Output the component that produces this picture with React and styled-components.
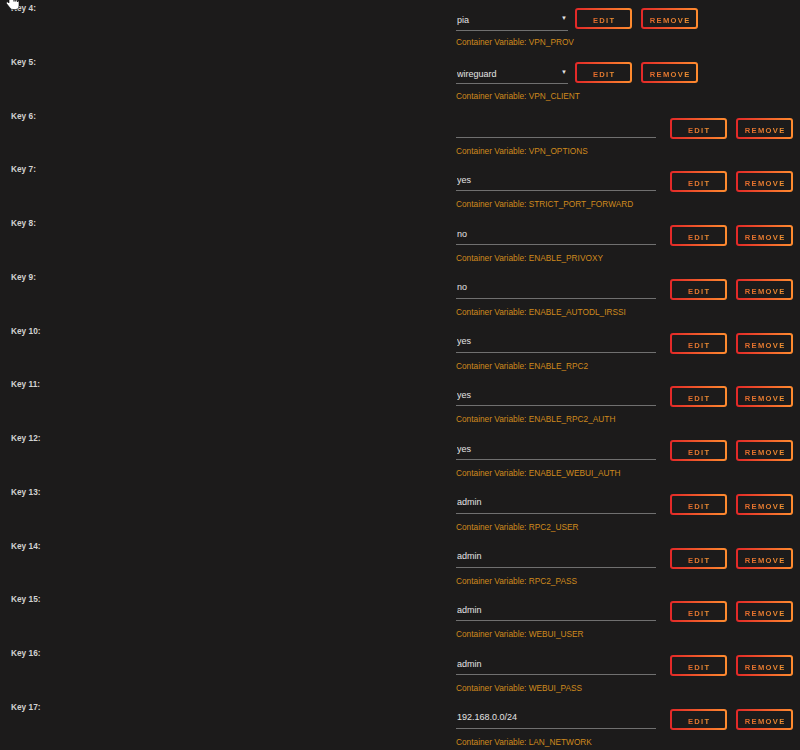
import React from 'react';
import styled, { createGlobalStyle } from 'styled-components';

const GlobalStyle = createGlobalStyle`
  html, body {
    margin: 0;
    padding: 0;
    background: #1c1b1b;
  }
  body {
    font-family: "Liberation Sans", Arial, sans-serif;
    overflow: hidden;
  }
`;

const Page = styled.div`
  position: relative;
  width: 800px;
  height: 750px;
  background: #1c1b1b;
`;

const Row = styled.div`
  display: grid;
  grid-template-columns: 456px 1fr;
  height: 53.77px;
`;

const Label = styled.div`
  padding-left: 11px;
  font-size: 8.3px;
  font-weight: bold;
  line-height: 16px;
  color: #d2d2d2;
`;

const Field = styled.div`
  display: flex;
  flex-direction: column;
`;

const Controls = styled.div`
  display: flex;
  align-items: flex-end;
  height: ${p => (p.$compact ? 29 : 31)}px;
`;

const TextInput = styled.input`
  box-sizing: border-box;
  width: 200px;
  height: 22px;
  margin: 0 14px 1px 0;
  padding: 0 0 0 1px;
  background: transparent;
  border: none;
  border-bottom: 1px solid #707070;
  outline: none;
  color: #e4e4e4;
  font-family: "Liberation Sans", Arial, sans-serif;
  font-size: 9px;
`;

const SelectWrap = styled.div`
  position: relative;
  width: 112px;
  height: 20px;
  margin: 0 7px 0 0;
`;

const Select = styled.select`
  box-sizing: border-box;
  appearance: none;
  width: 100%;
  height: 100%;
  padding: 0 0 0 1px;
  background: transparent;
  border: none;
  border-bottom: 1px solid #707070;
  border-radius: 0;
  outline: none;
  color: #e4e4e4;
  font-family: "Liberation Sans", Arial, sans-serif;
  font-size: 9px;
`;

const Arrow = styled.span`
  position: absolute;
  right: 1px;
  top: 6px;
  font-size: 6px;
  color: #e4e4e4;
  pointer-events: none;
`;

const Button = styled.button`
  box-sizing: border-box;
  width: 57px;
  height: 21px;
  margin-right: 9px;
  padding: 0;
  border: 2px solid transparent;
  border-radius: 3px;
  background:
    linear-gradient(#1c1b1b, #1c1b1b) padding-box,
    linear-gradient(90deg, #e22828 0%, #ff8c2f 100%) border-box;
  cursor: pointer;
`;

const ButtonText = styled.span`
  display: inline-block;
  padding-left: 1.3px;
  font-family: "Liberation Sans", Arial, sans-serif;
  font-size: 7.6px;
  font-weight: bold;
  letter-spacing: 1.3px;
  background: linear-gradient(90deg, #e4682c 0%, #f39534 100%);
  -webkit-background-clip: text;
  background-clip: text;
  color: transparent;
`;

const Note = styled.div`
  margin-top: ${p => (p.$compact ? 7 : 6)}px;
  font-size: 8.3px;
  line-height: 12px;
  color: #cf8a1d;
`;

const Cursor = styled.svg`
  position: absolute;
  left: 5px;
  top: -4px;
`;

const rows = [
  { key: 4, value: 'pia', name: 'VPN_PROV', select: true },
  { key: 5, value: 'wireguard', name: 'VPN_CLIENT', select: true },
  { key: 6, value: '', name: 'VPN_OPTIONS' },
  { key: 7, value: 'yes', name: 'STRICT_PORT_FORWARD' },
  { key: 8, value: 'no', name: 'ENABLE_PRIVOXY' },
  { key: 9, value: 'no', name: 'ENABLE_AUTODL_IRSSI' },
  { key: 10, value: 'yes', name: 'ENABLE_RPC2' },
  { key: 11, value: 'yes', name: 'ENABLE_RPC2_AUTH' },
  { key: 12, value: 'yes', name: 'ENABLE_WEBUI_AUTH' },
  { key: 13, value: 'admin', name: 'RPC2_USER' },
  { key: 14, value: 'admin', name: 'RPC2_PASS' },
  { key: 15, value: 'admin', name: 'WEBUI_USER' },
  { key: 16, value: 'admin', name: 'WEBUI_PASS' },
  { key: 17, value: '192.168.0.0/24', name: 'LAN_NETWORK' },
];

const VariableRow = ({ row }) => (
  <Row>
    <Label>Key {row.key}:</Label>
    <Field>
      <Controls $compact={row.select}>
        {row.select ? (
          <SelectWrap>
            <Select defaultValue={row.value}>
              <option value={row.value}>{row.value}</option>
            </Select>
            <Arrow>▼</Arrow>
          </SelectWrap>
        ) : (
          <TextInput readOnly value={row.value} />
        )}
        <Button><ButtonText>EDIT</ButtonText></Button>
        <Button><ButtonText>REMOVE</ButtonText></Button>
      </Controls>
      <Note $compact={row.select}>Container Variable: {row.name}</Note>
    </Field>
  </Row>
);

export default function App() {
  return (
    <Page>
      <GlobalStyle />
      {rows.map(row => <VariableRow key={row.key} row={row} />)}
      <Cursor width="16" height="14" viewBox="0 0 16 14">
        <path
          d="M4 0 L4 7 L3 6 Q1 5 1.5 7.5 L5 12 Q6 13.5 8 13.5 L11 13.5 Q14 13.5 14 10 L14 6 Q14 4.5 12.5 4.8 L12.5 6 L12.5 4.5 Q12 3.5 10.8 4 L10.8 5.5 L10.8 4 Q10 3 9 3.8 L9 5.5 L9 0 Z"
          fill="#ffffff"
          stroke="#000000"
          strokeWidth="0.6"
        />
      </Cursor>
    </Page>
  );
}
